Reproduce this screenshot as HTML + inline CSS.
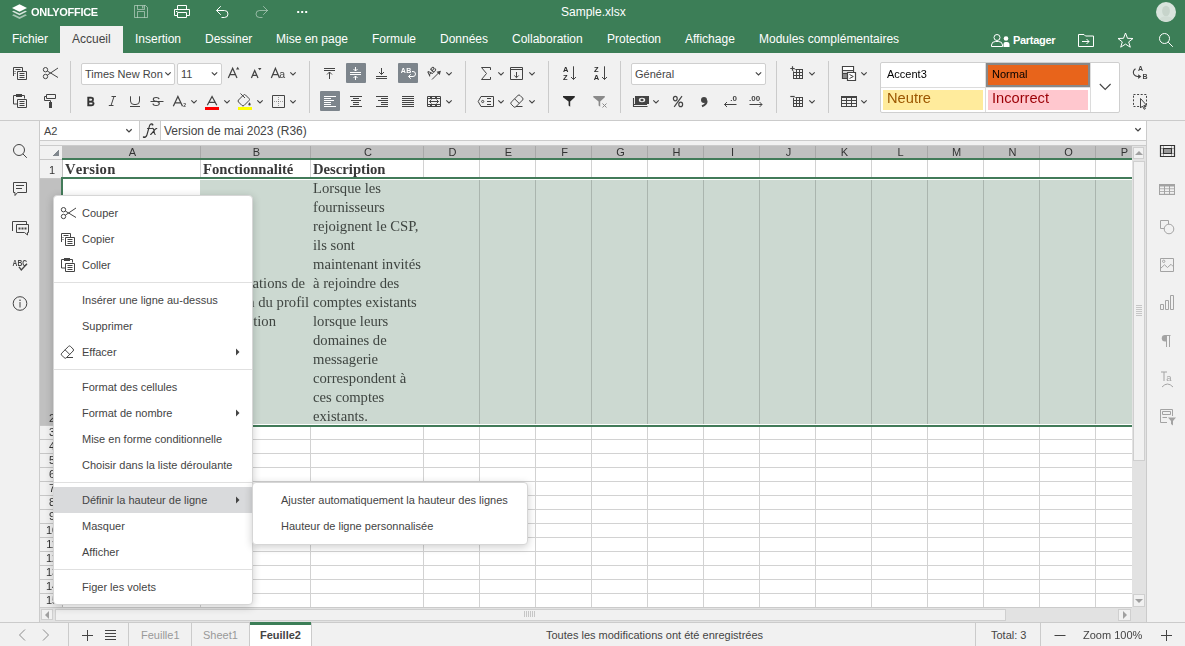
<!DOCTYPE html>
<html><head><meta charset="utf-8"><style>
html,body{margin:0;padding:0;}
.nk{font-kerning:none}
body{width:1185px;height:646px;overflow:hidden;position:relative;background:#f1f1f1;font-family:"Liberation Sans",sans-serif;}
svg{overflow:visible}
</style></head><body>
<div style="position:absolute;left:0px;top:0px;width:1185px;height:53px;background:#3c7e57;"></div><div style="position:absolute;left:31px;top:6px;font-size:11px;line-height:13px;color:#fff;font-weight:bold;font-family:'Liberation Sans';white-space:nowrap;letter-spacing:-0.3px;will-change:transform">ONLYOFFICE</div><div style="position:absolute;left:561px;top:5px;font-size:12px;line-height:14px;color:#fff;font-weight:normal;font-family:'Liberation Sans';white-space:nowrap;">Sample.xlsx</div><svg style="position:absolute;left:1154px;top:0px;overflow:hidden" width="24" height="24" viewBox="1154 0 24 24"><defs><clipPath id="av"><circle cx="1166" cy="12" r="10"/></clipPath></defs><circle cx="1166" cy="12" r="10" fill="#d9e4dd"/><g clip-path="url(#av)"><ellipse cx="1166" cy="11" rx="3.9" ry="5.2" fill="#c7d4cb"/><path d="M1158 23 Q1159.5 17 1164 16.5 H1168 Q1172.5 17 1174 23Z" fill="#d0dcd4"/></g></svg><div style="position:absolute;left:60px;top:26px;width:63px;height:27px;background:#f1f1f1;"></div><div style="position:absolute;left:12px;top:32px;font-size:12px;line-height:14px;color:#fff;font-weight:normal;font-family:'Liberation Sans';white-space:nowrap;">Fichier</div><div style="position:absolute;left:72px;top:32px;font-size:12px;line-height:14px;color:#444;font-weight:normal;font-family:'Liberation Sans';white-space:nowrap;">Accueil</div><div style="position:absolute;left:135px;top:32px;font-size:12px;line-height:14px;color:#fff;font-weight:normal;font-family:'Liberation Sans';white-space:nowrap;">Insertion</div><div style="position:absolute;left:205px;top:32px;font-size:12px;line-height:14px;color:#fff;font-weight:normal;font-family:'Liberation Sans';white-space:nowrap;">Dessiner</div><div style="position:absolute;left:276px;top:32px;font-size:12px;line-height:14px;color:#fff;font-weight:normal;font-family:'Liberation Sans';white-space:nowrap;">Mise en page</div><div style="position:absolute;left:372px;top:32px;font-size:12px;line-height:14px;color:#fff;font-weight:normal;font-family:'Liberation Sans';white-space:nowrap;">Formule</div><div style="position:absolute;left:440px;top:32px;font-size:12px;line-height:14px;color:#fff;font-weight:normal;font-family:'Liberation Sans';white-space:nowrap;">Données</div><div style="position:absolute;left:512px;top:32px;font-size:12px;line-height:14px;color:#fff;font-weight:normal;font-family:'Liberation Sans';white-space:nowrap;">Collaboration</div><div style="position:absolute;left:607px;top:32px;font-size:12px;line-height:14px;color:#fff;font-weight:normal;font-family:'Liberation Sans';white-space:nowrap;">Protection</div><div style="position:absolute;left:685px;top:32px;font-size:12px;line-height:14px;color:#fff;font-weight:normal;font-family:'Liberation Sans';white-space:nowrap;">Affichage</div><div style="position:absolute;left:759px;top:32px;font-size:12px;line-height:14px;color:#fff;font-weight:normal;font-family:'Liberation Sans';white-space:nowrap;">Modules complémentaires</div><svg style="position:absolute;left:991px;top:33px" width="20" height="15" viewBox="0 0 20 15" ><circle cx="6" cy="4.5" r="3" fill="none" stroke="#fff"/><path d="M0.5 13.5 V12 A3.8 3.8 0 0 1 4.3 8.5 H7.7 A3.8 3.8 0 0 1 11.5 12 V13.5Z" fill="none" stroke="#fff"/><circle cx="15" cy="5.5" r="2.3" fill="#fff"/><path d="M12.5 14 V11 A2 2 0 0 1 14.5 9 H16 A2.5 2.5 0 0 1 18.5 11.5 V14Z" fill="#fff"/></svg><div style="position:absolute;left:1013px;top:34px;font-size:11px;line-height:13px;color:#fff;font-weight:bold;font-family:'Liberation Sans';white-space:nowrap;letter-spacing:-0.3px">Partager</div><svg style="position:absolute;left:1078px;top:34px" width="17" height="14" viewBox="0 0 17 14" ><path d="M0.5 0.5 H6 L7.5 2 H15.5 V12.5 H0.5Z" fill="none" stroke="#fff"/><path d="M4 7.5 H11 M8.5 5 L11 7.5 L8.5 10" fill="none" stroke="#fff"/></svg><svg style="position:absolute;left:1117px;top:32px" width="17" height="16" viewBox="0 0 17 16" ><path d="M8.5 1 L10.5 6.3 L16 6.5 L11.7 9.9 L13.3 15.2 L8.5 12.1 L3.7 15.2 L5.3 9.9 L1 6.5 L6.5 6.3Z" fill="none" stroke="#fff"/></svg><svg style="position:absolute;left:1159px;top:33px" width="15" height="15" viewBox="0 0 15 15" ><circle cx="5.5" cy="5.5" r="5" fill="none" stroke="#fff"/><path d="M9.2 9.2 L13.8 13.8" stroke="#fff"/></svg><div style="position:absolute;left:0px;top:53px;width:1185px;height:67px;background:#f1f1f1;"></div><div style="position:absolute;left:0px;top:120px;width:1185px;height:1px;background:#cbcbcb;"></div><div style="position:absolute;left:70px;top:61px;width:1px;height:52px;background:#cbcbcb;"></div><div style="position:absolute;left:309px;top:61px;width:1px;height:52px;background:#cbcbcb;"></div><div style="position:absolute;left:465px;top:61px;width:1px;height:52px;background:#cbcbcb;"></div><div style="position:absolute;left:548px;top:61px;width:1px;height:52px;background:#cbcbcb;"></div><div style="position:absolute;left:620px;top:61px;width:1px;height:52px;background:#cbcbcb;"></div><div style="position:absolute;left:776px;top:61px;width:1px;height:52px;background:#cbcbcb;"></div><div style="position:absolute;left:828px;top:61px;width:1px;height:52px;background:#cbcbcb;"></div><div style="position:absolute;left:81px;top:63px;width:92px;height:20px;background:#fff;border:1px solid #cfcfcf;border-radius:2px"></div><div style="position:absolute;left:85px;top:68px;font-size:11px;line-height:13px;color:#444;font-weight:normal;font-family:'Liberation Sans';white-space:nowrap;">Times New Ron</div><div style="position:absolute;left:177px;top:63px;width:43px;height:20px;background:#fff;border:1px solid #cfcfcf;border-radius:2px"></div><div style="position:absolute;left:181px;top:68px;font-size:11px;line-height:13px;color:#444;font-weight:normal;font-family:'Liberation Sans';white-space:nowrap;">11</div><div style="position:absolute;left:631px;top:63px;width:133px;height:20px;background:#fff;border:1px solid #cfcfcf;border-radius:2px"></div><div style="position:absolute;left:635px;top:68px;font-size:11px;line-height:13px;color:#444;font-weight:normal;font-family:'Liberation Sans';white-space:nowrap;">Général</div><div style="position:absolute;left:346px;top:63px;width:20px;height:20px;background:#7d858c;border-radius:1px"></div><div style="position:absolute;left:398px;top:63px;width:20px;height:20px;background:#7d858c;border-radius:1px"></div><div style="position:absolute;left:320px;top:91px;width:20px;height:20px;background:#7d858c;border-radius:1px"></div><div style="position:absolute;left:880px;top:62px;width:240px;height:51px;background:#fff;box-sizing:border-box;border:1px solid #cfcfcf;border-radius:2px"></div><div style="position:absolute;left:881px;top:87px;width:209px;height:1px;background:#dcdcdc;"></div><div style="position:absolute;left:985px;top:63px;width:1px;height:49px;background:#dcdcdc;"></div><div style="position:absolute;left:1090px;top:63px;width:1px;height:49px;background:#dcdcdc;"></div><div style="position:absolute;left:887px;top:68px;font-size:11px;line-height:13px;color:#000;font-weight:normal;font-family:'Liberation Sans';white-space:nowrap;will-change:transform">Accent3</div><div style="position:absolute;left:986px;top:63px;width:104px;height:24px;background:#e8641b;box-sizing:border-box;border:2px solid #888"></div><div style="position:absolute;left:992px;top:68px;font-size:11px;line-height:13px;color:#000;font-weight:normal;font-family:'Liberation Sans';white-space:nowrap;will-change:transform">Normal</div><div style="position:absolute;left:883px;top:90px;width:100px;height:20px;background:#ffeb9c;"></div><div style="position:absolute;left:887px;top:90px;font-size:14.67px;line-height:16.67px;color:#9c5700;font-weight:normal;font-family:'Liberation Sans';white-space:nowrap;will-change:transform">Neutre</div><div style="position:absolute;left:988px;top:90px;width:100px;height:20px;background:#ffc7ce;"></div><div style="position:absolute;left:992px;top:90px;font-size:14.67px;line-height:16.67px;color:#9c0006;font-weight:normal;font-family:'Liberation Sans';white-space:nowrap;will-change:transform">Incorrect</div><svg style="position:absolute;left:0px;top:0px;will-change:transform;overflow:hidden" width="1185" height="120" viewBox="0 0 1185 120"><path d="M13.5 76 V67.5 H22.5 V71" stroke="#444444" fill="none"/><path d="M15.5 69.5 H20.5" stroke="#444444" fill="none"/><path d="M14.5 71 h1 v1 h-1z M14.5 73 h1 v1 h-1z" fill="#444444"/><path d="M17.5 71.5 H26.5 V79.5 H17.5Z" stroke="#444444" fill="#f1f1f1"/><path d="M19.5 73.5 H24.5 M19.5 75.5 H24.5 M19.5 77.5 H24.5" stroke="#444444" fill="none"/><circle cx="45.5" cy="69.7" r="2.2" fill="none" stroke="#444444"/><circle cx="45.5" cy="76.5" r="2.2" fill="none" stroke="#444444"/><path d="M47.3 71 L58 77.5 M47.3 75.2 L58 68" stroke="#444444" fill="none"/><path d="M16 95.5 H13.5 V104 H17 M22 95.5 H24.5 V98.5" stroke="#444444" fill="none"/><path d="M16 94 H22 V97 H16Z" fill="#444444"/><path d="M17.5 99.5 H26.5 V107.5 H17.5Z" stroke="#444444" fill="#f1f1f1"/><path d="M19.5 101.5 H24.5 M19.5 103.5 H24.5 M19.5 105.5 H24.5" stroke="#444444" fill="none"/><path d="M46.5 94.5 H55.5 V98.5 H46.5Z" stroke="#444444" fill="none" stroke-width="1" /><path d="M46.5 96.5 H44.5 V100.5 H50.5 V102" stroke="#444444" fill="none" stroke-width="1" /><path d="M49 102 H52 V108 H49Z" fill="#444444" /><path d="M228.3 78 L232.65 68.3 L237 78 M229.779 74.702 H235.52100000000002" stroke="#444444" fill="none" stroke-width="1.25" /><path d="M236 69.5 L237.7 66.8 L239.4 69.5Z" fill="#444444" /><path d="M251.4 78 L254.7 70.5 L258 78 M252.522 75.45 H256.878" stroke="#444444" fill="none" stroke-width="1.25" /><path d="M258 68 L261.5 68 L259.75 70.3Z" fill="#444444" /><path d="M271.3 78 L275.4 68.3 L279.5 78 M272.694 74.702 H278.106" stroke="#444444" fill="none" stroke-width="1.25" /><text x="279.3" y="78" font-family="Liberation Sans" font-size="10.5" font-weight="normal" fill="#444444" >a</text><path d="M290.3 72.3 L293 75 L295.7 72.3" stroke="#444444" fill="none" stroke-width="1.1" /><text x="86.7" y="106.3" font-family="Liberation Sans" font-size="13.5" font-weight="bold" fill="#333" textLength="8" lengthAdjust="spacingAndGlyphs" stroke="#333" stroke-width="0.35">B</text><path d="M111.5 96.5 H116 M108.8 105.5 H113.5 M114 96.5 L111 105.5" stroke="#444444" fill="none" stroke-width="1" /><path d="M130.5 96.3 V101 A3.5 3.5 0 0 0 134 104.5 H136 A3.5 3.5 0 0 0 139.5 101 V96.3" stroke="#444444" fill="none" stroke-width="1" /><path d="M130 106.5 H140" stroke="#444444" fill="none" stroke-width="1" /><path d="M150.5 101.5 H163.5" stroke="#444444" fill="none" stroke-width="1" /><text x="151.8" y="106.2" font-family="Liberation Sans" font-size="13" font-weight="normal" fill="#444444" >S</text><path d="M173.3 106.3 L177.9 96.5 L182.5 106.3 M174.864 102.968 H180.936" stroke="#444444" fill="none" stroke-width="1.25" /><text x="183.3" y="106.5" font-family="Liberation Sans" font-size="5" font-weight="bold" fill="#444444" >2</text><path d="M191.3 100.3 L194 103 L196.7 100.3" stroke="#444444" fill="none" stroke-width="1.1" /><path d="M207.3 105.3 L212.05 96.5 L216.8 105.3 M208.91500000000002 102.30799999999999 H215.185" stroke="#444444" fill="none" stroke-width="1.25" /><path d="M205 107 H219 V110 H205Z" fill="#ff0000" /><path d="M224.3 100.3 L227 103 L229.7 100.3" stroke="#444444" fill="none" stroke-width="1.1" /><path d="M240.5 93.5 L245 98" stroke="#444444" fill="none" stroke-width="1" /><path d="M238.5 100 L243.5 95 Q244.5 94 245.5 95 L249 98.5 Q250 99.5 249 100.5 L244 105.5 Q243 106.5 242 105.5 L238.5 102 Q237.5 101 238.5 100Z" stroke="#444444" fill="none" stroke-width="1" /><path d="M249.5 102.2 Q248 104 248.4 104.9 Q249.5 106.2 250.6 104.9 Q251 104 249.5 102.2Z" fill="#444444" /><path d="M238 107 H252 V110 H238Z" fill="#ffff00" /><path d="M257.3 100.3 L260 103 L262.7 100.3" stroke="#444444" fill="none" stroke-width="1.1" /><path d="M272.5 95.5 H284.5 V107.5 H272.5Z" stroke="#444444" fill="none" stroke-width="1" /><path d="M278.5 97 V106.5 M274 101.5 H283.5" stroke="#444444" fill="none" stroke-width="1" stroke-dasharray="1 1" opacity="0.5"/><path d="M290.3 100.3 L293 103 L295.7 100.3" stroke="#444444" fill="none" stroke-width="1.1" /><path d="M324 68.5 H335 M324 70.5 H335 M329.5 72 V79 M327 74.5 L329.5 72 L332 74.5" stroke="#444444" fill="none" stroke-width="1" /><path d="M350 72.5 H361 M350 74.5 H361 M355.5 67 V71 M353.5 69 L355.5 71 L357.5 69 M355.5 76 V80 M353.5 78 L355.5 76 L357.5 78" stroke="#ffffff" fill="none" stroke-width="1" /><path d="M376 76.5 H387 M376 78.5 H387 M381.5 68 V74.5 M379 72 L381.5 74.5 L384 72" stroke="#444444" fill="none" stroke-width="1" /><text x="400.8" y="73" font-family="Liberation Sans" font-size="7" font-weight="bold" fill="#ffffff" textLength="10.4" lengthAdjust="spacing">AB</text><path d="M412 71.5 H413 A2.5 2.5 0 0 1 413 76.5 H408.5 M410.8 74.2 L408.5 76.5 L410.8 78.8" stroke="#ffffff" fill="none" stroke-width="1" /><text x="429.5" y="77" font-family="Liberation Sans" font-size="7.5" font-weight="bold" fill="#444444" transform="rotate(-45 429.5 77)">AB</text><path d="M432 79.5 L440 71.5" stroke="#444444" fill="none" stroke-width="1" /><path d="M440.8 70.8 L436.5 71.8 L439.8 75.1Z" fill="#444444" /><path d="M446.3 72.3 L449 75 L451.7 72.3" stroke="#444444" fill="none" stroke-width="1.1" /><path d="M324 96.5 H336 M324 98.5 H331 M324 100.5 H334 M324 102.5 H331 M324 104.5 H331 M324 106.5 H336" stroke="#ffffff" fill="none" stroke-width="1" /><path d="M350 96.5 H362 M353 98.5 H359 M351 100.5 H361 M353 102.5 H359 M353 104.5 H359 M350 106.5 H362" stroke="#444444" fill="none" stroke-width="1" /><path d="M376 96.5 H388 M381 98.5 H388 M378 100.5 H388 M381 102.5 H388 M381 104.5 H388 M376 106.5 H388" stroke="#444444" fill="none" stroke-width="1" /><path d="M402 96.5 H414 M402 98.5 H414 M402 100.5 H414 M402 102.5 H414 M402 104.5 H414 M402 106.5 H414" stroke="#444444" fill="none" stroke-width="1" /><path d="M427.5 96.5 H440.5 V106.5 H427.5Z" stroke="#444444" fill="none" stroke-width="1" /><path d="M427.5 98.5 H440.5 M427.5 104.5 H440.5" stroke="#444444" fill="none" stroke-width="1" /><path d="M430 97.5 H432 M435 97.5 H437 M430 105.5 H432 M435 105.5 H437" stroke="#444444" fill="none" stroke-width="1" /><path d="M429.5 101.5 H438.5 M431.5 99.5 L429.5 101.5 L431.5 103.5 M436.5 99.5 L438.5 101.5 L436.5 103.5" stroke="#444444" fill="none" stroke-width="1" /><path d="M446.3 100.3 L449 103 L451.7 100.3" stroke="#444444" fill="none" stroke-width="1.1" /><path d="M490.5 70 V67.5 H481.5 L486.5 73.5 L481.5 79.5 H490.5 V77" stroke="#444444" fill="none" stroke-width="1" /><path d="M498.3 72.3 L501 75 L503.7 72.3" stroke="#444444" fill="none" stroke-width="1.1" /><path d="M510.5 67.5 H522.5 V79.5 H510.5Z M510.5 69.5 H522.5" stroke="#444444" fill="none" stroke-width="1" /><path d="M516.5 72 V77.5 M514.3 75.5 L516.5 77.7 L518.7 75.5" stroke="#444444" fill="none" stroke-width="1" /><path d="M529.3 72.3 L532 75 L534.7 72.3" stroke="#444444" fill="none" stroke-width="1.1" /><path d="M481 96.5 H493.5 V106.5 H481 L478.2 101.5Z" stroke="#444444" fill="none" stroke-width="1" /><circle cx="482.7" cy="101.5" r="1.1" fill="none" stroke="#444444"/><path d="M487 98.5 H491 M487 101.5 H491 M487 104.5 H491" stroke="#444444" fill="none" stroke-width="1" /><path d="M498.3 100.3 L501 103 L503.7 100.3" stroke="#444444" fill="none" stroke-width="1.1" /><path d="M511.2 102.2 L518 95.4 Q519 94.4 520 95.4 L522.6 98 Q523.6 99 522.6 100 L515.8 106.8 Q514.8 107.8 513.8 106.8 L511.2 104.2 Q510.2 103.2 511.2 102.2Z" stroke="#444444" fill="none"/><path d="M514.6 98.8 L519.2 103.4 M516 106.5 H522.5" stroke="#444444" fill="none"/><path d="M529.3 100.3 L532 103 L534.7 100.3" stroke="#444444" fill="none" stroke-width="1.1" /><text x="562.9" y="71.8" font-family="Liberation Sans" font-size="7.5" font-weight="bold" fill="#2a2a2a" >A</text><text x="563.1" y="79.8" font-family="Liberation Sans" font-size="7.5" font-weight="bold" fill="#2a2a2a" >Z</text><path d="M573.5 66.3 V79.5 M571 77 L573.5 79.5 L576 77" stroke="#444444" fill="none" stroke-width="1" /><text x="593.9" y="71.8" font-family="Liberation Sans" font-size="7.5" font-weight="bold" fill="#2a2a2a" >Z</text><text x="593.8" y="79.8" font-family="Liberation Sans" font-size="7.5" font-weight="bold" fill="#2a2a2a" >A</text><path d="M604.5 66.3 V79.5 M602 77 L604.5 79.5 L607 77" stroke="#444444" fill="none" stroke-width="1" /><path d="M563 96 H574.8 V97.2 L570.2 101.5 V106.8 L568.6 105.5 V101.5 L563 97.2Z" fill="#2a2a2a" /><path d="M593.3 96 H604.8 V97.2 L600.2 101.5 V106.8 L598.6 105.5 V101.5 L593.3 97.2Z" fill="#8a8a8a" /><path d="M602.5 103.5 L606.5 107.5 M606.5 103.5 L602.5 107.5" stroke="#8a8a8a" fill="none" stroke-width="1" /><path d="M635 96 H649 V104 H635Z" fill="#444444" /><ellipse cx="642" cy="100" rx="3.2" ry="2.2" fill="#f1f1f1"/><ellipse cx="642" cy="100" rx="1.6" ry="1.3" fill="#444444"/><path d="M633.5 98 V106.5 H647.5 M633.5 104.5 H635 M635 104.5 H647" stroke="#444444" fill="none" stroke-width="1.1" /><path d="M653.3 100.3 L656 103 L658.7 100.3" stroke="#444444" fill="none" stroke-width="1.1" /><ellipse cx="675.3" cy="98.6" rx="1.9" ry="2.2" stroke="#444444" stroke-width="1.2" fill="none"/><ellipse cx="680.7" cy="104.4" rx="1.9" ry="2.2" stroke="#444444" stroke-width="1.2" fill="none"/><path d="M682 96.2 L674.2 106.8" stroke="#444444" stroke-width="1.2"/><circle cx="704" cy="100" r="3" fill="#444444"/><path d="M706.6 100.5 Q706.8 104.5 702 106.3" stroke="#444444" fill="none" stroke-width="2" /><path d="M724.5 104.5 H736.5 M727 102 L724.5 104.5 L727 107" stroke="#444444" fill="none" stroke-width="1" /><text x="730.3" y="101.2" font-family="Liberation Sans" font-size="8" font-weight="bold" fill="#444444" >.0</text><path d="M749.5 104.5 H762 M759.5 102 L762 104.5 L759.5 107" stroke="#444444" fill="none" stroke-width="1" /><text x="749" y="101.2" font-family="Liberation Sans" font-size="8" font-weight="bold" fill="#444444" >.00</text><rect x="793" y="69" width="10" height="10" fill="#444444"/><rect x="794" y="70" width="2" height="2" fill="#f1f1f1"/><rect x="794" y="73" width="2" height="2" fill="#f1f1f1"/><rect x="794" y="76" width="2" height="2" fill="#f1f1f1"/><rect x="797" y="70" width="2" height="2" fill="#f1f1f1"/><rect x="797" y="73" width="2" height="2" fill="#f1f1f1"/><rect x="797" y="76" width="2" height="2" fill="#f1f1f1"/><rect x="800" y="70" width="2" height="2" fill="#f1f1f1"/><rect x="800" y="73" width="2" height="2" fill="#f1f1f1"/><rect x="800" y="76" width="2" height="2" fill="#f1f1f1"/><path d="M792.5 65.5 V71.5 M789.5 68.5 H795.5" stroke="#f1f1f1" fill="none" stroke-width="2.6" /><path d="M792.5 66.3 V70.7 M790.3 68.5 H794.7" stroke="#444444" fill="none" stroke-width="1.2" /><path d="M809.3 72.3 L812 75 L814.7 72.3" stroke="#444444" fill="none" stroke-width="1.1" /><rect x="793" y="97" width="10" height="10" fill="#444444"/><rect x="794" y="98" width="2" height="2" fill="#f1f1f1"/><rect x="794" y="101" width="2" height="2" fill="#f1f1f1"/><rect x="794" y="104" width="2" height="2" fill="#f1f1f1"/><rect x="797" y="98" width="2" height="2" fill="#f1f1f1"/><rect x="797" y="101" width="2" height="2" fill="#f1f1f1"/><rect x="797" y="104" width="2" height="2" fill="#f1f1f1"/><rect x="800" y="98" width="2" height="2" fill="#f1f1f1"/><rect x="800" y="101" width="2" height="2" fill="#f1f1f1"/><rect x="800" y="104" width="2" height="2" fill="#f1f1f1"/><path d="M789.5 96.5 H795.5" stroke="#f1f1f1" fill="none" stroke-width="2.6" /><path d="M790.3 96.5 H794.7" stroke="#444444" fill="none" stroke-width="1.2" /><path d="M809.3 100.3 L812 103 L814.7 100.3" stroke="#444444" fill="none" stroke-width="1.1" /><path d="M842.5 66.5 H853.5 V78.5 H842.5Z" stroke="#444444" fill="none" stroke-width="1.2" /><path d="M843 67 H853 V70 H843Z" fill="#ffffff" /><path d="M843 70.5 H853 V74 H843Z" fill="#d8d8d8" /><path d="M843 74 H853 V78 H843Z" fill="#8a8a8a" /><path d="M842.5 70.5 H853.5 M842.5 73.5 H853.5" stroke="#444444" fill="none" stroke-width="1" /><path d="M847.5 72.5 H855.5 V80.5 H847.5Z" stroke="#444444" fill="#ffffff" stroke-width="1.2" /><path d="M849.5 74.5 L853.3 76.5 L849.5 78.5" stroke="#444444" fill="none" stroke-width="1" /><path d="M861.3 72.3 L864 75 L866.7 72.3" stroke="#444444" fill="none" stroke-width="1.1" /><path d="M841 96 H857 V107 H841Z" fill="#444444" /><rect x="842" y="98" width="4" height="2" fill="#f1f1f1"/><rect x="847" y="98" width="4" height="2" fill="#f1f1f1"/><rect x="852" y="98" width="4" height="2" fill="#f1f1f1"/><rect x="842" y="101" width="4" height="2" fill="#f1f1f1"/><rect x="847" y="101" width="4" height="2" fill="#f1f1f1"/><rect x="852" y="101" width="4" height="2" fill="#f1f1f1"/><rect x="842" y="104" width="4" height="2" fill="#f1f1f1"/><rect x="847" y="104" width="4" height="2" fill="#f1f1f1"/><rect x="852" y="104" width="4" height="2" fill="#f1f1f1"/><path d="M861.3 100.3 L864 103 L866.7 100.3" stroke="#444444" fill="none" stroke-width="1.1" /><path d="M165.3 72.3 L168 75 L170.7 72.3" stroke="#444444" fill="none" stroke-width="1.1" /><path d="M211.8 72.3 L214.5 75 L217.2 72.3" stroke="#444444" fill="none" stroke-width="1.1" /><path d="M755.8 72.3 L758.5 75 L761.2 72.3" stroke="#444444" fill="none" stroke-width="1.1" /><path d="M1099.8 84 L1105.2 89.4 L1110.6 84" stroke="#444444" fill="none" stroke-width="1.1" /><text x="1137.9" y="70.8" font-family="Liberation Sans" font-size="7" font-weight="bold" fill="#444444" >A</text><text x="1142.4" y="78.8" font-family="Liberation Sans" font-size="7" font-weight="bold" fill="#444444" >B</text><path d="M1135.5 68.8 Q1132.5 71 1133.7 74 Q1135 76.6 1139.5 76.6" stroke="#444444" fill="none" stroke-width="1.1" /><path d="M1141.3 76.6 L1138.2 74.3 V78.9Z" fill="#444444" /><path d="M1133.5 94.5 H1146.5 V106.5 H1133.5Z" stroke="#444444" fill="none" stroke-width="1" stroke-dasharray="2 1.6"/><path d="M1140.5 98.5 V108 L1142.5 106 L1144.2 109.3 L1145.4 108.7 L1143.8 105.5 L1146.5 105.2Z" stroke="#444444" fill="#f1f1f1" stroke-width="1" /><path d="M134.5 5.5 H145.5 L147.5 7.5 V17.5 H134.5Z" stroke="rgba(255,255,255,0.45)" fill="none" stroke-width="1" /><path d="M137.5 5.5 V9.5 H144.5 V5.5 M137.5 17.5 V11.5 H144.5 V17.5" stroke="rgba(255,255,255,0.45)" fill="none" stroke-width="1" /><path d="M142 6 H143.5 V8.5 H142Z" fill="rgba(255,255,255,0.45)" /><path d="M177.5 9 V5.5 H186.5 V9 M177 15.5 H174.5 V9.5 H189.5 V15.5 H187 M177.5 12.5 H186.5 V17.5 H177.5Z" stroke="#ffffff" fill="none" stroke-width="1" /><path d="M176 11 H177.5 V12 H176Z" fill="#ffffff" /><path d="M216.5 10.5 H224.5 A3.5 3.5 0 0 1 224.5 17.5 H221.5 M220.8 6.2 L216.5 10.5 L220.8 14.8" stroke="#ffffff" fill="none" stroke-width="1" /><path d="M267.5 10.5 H259.5 A3.5 3.5 0 0 0 259.5 17.5 H262.5 M263.2 6.2 L267.5 10.5 L263.2 14.8" stroke="rgba(255,255,255,0.45)" fill="none" stroke-width="1" /><rect x="297.2" y="11" width="2" height="2" fill="#ffffff"/><rect x="301.2" y="11" width="2" height="2" fill="#ffffff"/><rect x="305.2" y="11" width="2" height="2" fill="#ffffff"/><path d="M19.5 4.3 L27 8 L19.5 11.7 L12 8Z" fill="#ffffff" /><path d="M13.8 10.7 L12 11.6 L19.5 15.3 L27 11.6 L25.2 10.7 L19.5 13.5Z" fill="rgba(255,255,255,0.8)" /><path d="M13.8 14.3 L12 15.2 L19.5 18.9 L27 15.2 L25.2 14.3 L19.5 17.1Z" fill="rgba(255,255,255,0.55)" /></svg><div style="position:absolute;left:0px;top:121px;width:1185px;height:525px;background:#f1f1f1;"></div><div style="position:absolute;left:39px;top:120px;width:1108px;height:1px;background:#cbcbcb;"></div><div style="position:absolute;left:40px;top:121px;width:99px;height:19px;background:#fff;"></div><div style="position:absolute;left:44px;top:125px;font-size:11px;line-height:13px;color:#444;font-weight:normal;font-family:'Liberation Sans';white-space:nowrap;">A2</div><div style="position:absolute;left:139px;top:121px;width:1px;height:19px;background:#cbcbcb;"></div><div style="position:absolute;left:140px;top:121px;width:20px;height:19px;background:#f1f1f1;"></div><svg style="position:absolute;left:140px;top:121px;will-change:transform;overflow:hidden" width="20" height="19" viewBox="140 121 20 19"><path d="M152.8 124.8 Q152 123.5 150.8 124 Q149.8 124.5 149.3 126.5 L146.9 135 Q146.2 137.4 143.8 137.4" stroke="#333" stroke-width="1.1" fill="none"/><circle cx="152.5" cy="124.7" r="0.9" fill="#333"/><circle cx="143.7" cy="137.1" r="0.9" fill="#333"/><path d="M147 128.5 H152.8" stroke="#333" stroke-width="0.9"/><path d="M152.3 128.4 Q153.4 128.2 153.8 129.8 L154.4 133.2 Q154.7 134.6 155.6 134.4 M157.2 128.6 Q156.4 128.2 155.5 129 L151.8 133.4 Q151 134.6 150.2 134.4" stroke="#333" stroke-width="1.1" fill="none"/></svg><div style="position:absolute;left:160px;top:121px;width:1px;height:19px;background:#cbcbcb;"></div><div style="position:absolute;left:161px;top:121px;width:985px;height:19px;background:#fff;"></div><div style="position:absolute;left:164px;top:124px;font-size:12px;line-height:14px;color:#444;font-weight:normal;font-family:'Liberation Sans';white-space:nowrap;">Version de mai 2023 (R36)</div><svg style="position:absolute;left:120px;top:124px;will-change:transform;overflow:hidden" width="1026" height="12" viewBox="120 124 1026 12"><path d="M126.3 129.2 L129 131.9 L131.7 129.2 M1135.3 128.2 L1138 130.9 L1140.7 128.2" stroke="#444" stroke-width="1.3" fill="none"/></svg><div style="position:absolute;left:39px;top:140px;width:1108px;height:1px;background:#cbcbcb;"></div><div style="position:absolute;left:39px;top:145px;width:1108px;height:1px;background:#cbcbcb;"></div><div style="position:absolute;left:39px;top:120px;width:1px;height:502px;background:#cbcbcb;"></div><div style="position:absolute;left:1146px;top:120px;width:1px;height:502px;background:#cbcbcb;"></div><svg style="position:absolute;left:10px;top:141px;overflow:hidden" width="20" height="19" viewBox="10 141 20 19"><circle cx="19" cy="150" r="5.5" stroke="#444444" fill="none"/><path d="M22.9 153.9 L26.8 157.8" stroke="#444444" fill="none"/></svg><svg style="position:absolute;left:10px;top:180px;overflow:hidden" width="20" height="18" viewBox="10 180 20 18"><path d="M13.5 182.5 H26.5 V192.5 H17.5 L15 195.5 V192.5 H13.5Z" stroke="#444444" fill="none"/><path d="M16 185.5 H24 M16 188.5 H22" stroke="#444444" fill="none"/></svg><svg style="position:absolute;left:10px;top:218px;overflow:hidden" width="20" height="20" viewBox="10 218 20 20"><path d="M12.5 231 V221.5 H26.5 V224" stroke="#444444" fill="none"/><path d="M16.5 224.5 H28.5 V232.5 H27.5 V235 L24.5 232.5 H16.5Z" stroke="#444444" fill="#f1f1f1"/><path d="M18.5 227.5 h2 v2 h-2z M21.5 227.5 h2 v2 h-2z M24.5 227.5 h2 v2 h-2z" fill="#444444"/></svg><svg style="position:absolute;left:10px;top:255px;will-change:transform;overflow:hidden" width="20" height="20" viewBox="10 255 20 20"><text x="12.6" y="266.2" font-family="Liberation Sans" font-size="8.2" font-weight="bold" fill="#444444" textLength="14.4" lengthAdjust="spacingAndGlyphs">ABC</text><path d="M19 266.8 L21.3 270 L27 263.8" stroke="#444444" stroke-width="1.3" fill="none"/></svg><svg style="position:absolute;left:12px;top:296px" width="16" height="16" viewBox="0 0 16 16" ><circle cx="8" cy="7.5" r="6.8" fill="none" stroke="#444444"/><path d="M8 6 V11.5" stroke="#444444"/><circle cx="8" cy="4.2" r="0.8" fill="#444444"/></svg><svg style="position:absolute;left:1147px;top:140px;will-change:transform;overflow:hidden" width="38" height="290" viewBox="1147 140 38 290"><path d="M1163.5 145.5 V156.5 M1171.5 145.5 V156.5 M1160.5 148.5 H1174.5 M1160.5 153.5 H1174.5" stroke="#aaa" fill="none"/><path d="M1160.5 145.5 H1174.5 V156.5 H1160.5Z M1163.5 148.5 H1171.5 V153.5 H1163.5Z" stroke="#333" stroke-width="1.2" fill="none"/><rect x="1164" y="149" width="7" height="4" fill="#999"/><rect x="1159" y="184" width="16" height="11" fill="#a3a3a3"/><rect x="1160" y="186.5" width="4" height="1.9" fill="#f1f1f1"/><rect x="1160" y="189.2" width="4" height="1.9" fill="#f1f1f1"/><rect x="1160" y="191.9" width="4" height="1.9" fill="#f1f1f1"/><rect x="1165" y="186.5" width="4" height="1.9" fill="#f1f1f1"/><rect x="1165" y="189.2" width="4" height="1.9" fill="#f1f1f1"/><rect x="1165" y="191.9" width="4" height="1.9" fill="#f1f1f1"/><rect x="1170" y="186.5" width="4" height="1.9" fill="#f1f1f1"/><rect x="1170" y="189.2" width="4" height="1.9" fill="#f1f1f1"/><rect x="1170" y="191.9" width="4" height="1.9" fill="#f1f1f1"/><path d="M1164 228.5 H1160.5 V220.5 H1168.5 V224" stroke="#a3a3a3" fill="none"/><circle cx="1169" cy="229" r="4.8" stroke="#a3a3a3" fill="none"/><path d="M1160.5 258.5 H1173.5 V271.5 H1160.5Z" stroke="#a3a3a3" fill="none"/><circle cx="1163.7" cy="261.3" r="1.2" stroke="#a3a3a3" fill="none"/><path d="M1160.5 268.5 L1164.5 264.8 L1167.5 267.5 L1171 264.3 L1173.5 266.8" stroke="#a3a3a3" fill="none"/><path d="M1160.5 304.5 H1163.5 V309.5 H1160.5Z M1165.5 300.5 H1168.5 V309.5 H1165.5Z M1170.5 295.5 H1173.5 V309.5 H1170.5Z" stroke="#a3a3a3" fill="none"/><path d="M1166.5 335 H1165 A3.2 3.2 0 0 0 1165 341.4 H1166.5Z" fill="#a3a3a3"/><path d="M1166.5 335.5 H1170.5 M1166.5 335 V347 M1169.5 335 V347" stroke="#a3a3a3" fill="none"/><path d="M1161 372 H1167 M1164 372 V381" stroke="#a3a3a3" fill="none"/><text x="1166.3" y="381" font-family="Liberation Sans" font-size="9.5" fill="#a3a3a3">a</text><path d="M1162 387 Q1167.5 381 1173 387" stroke="#a3a3a3" fill="none"/><path d="M1167 422.5 H1160.5 V409.5 H1172.5 V416" stroke="#a3a3a3" fill="none"/><path d="M1162.5 411.5 H1170.5 V414.5 H1162.5Z M1162.5 417.5 H1167" stroke="#a3a3a3" fill="none"/><path d="M1168 417.5 H1176 L1173 421 V425.5 L1171 424 V421Z" fill="#a3a3a3"/></svg><svg style="position:absolute;left:0;top:0" width="1185" height="646" shape-rendering="crispEdges"><rect x="62" y="146" width="1070" height="461" fill="#fff"/><rect x="63" y="146" width="1069" height="12" fill="#c0c0c0"/><rect x="40" y="146" width="22" height="13" fill="#f1f1f1"/><path d="M52.5 156 L59 149.5 V156Z" fill="#80878d"/><rect x="40" y="159" width="22" height="1" fill="#c6c6c6"/><rect x="40" y="160" width="22" height="447" fill="#f1f1f1"/><rect x="40" y="179" width="22" height="246" fill="#c0c0c0"/><rect x="40" y="178" width="22" height="1" fill="#c6c6c6"/><rect x="40" y="425" width="22" height="1" fill="#c6c6c6"/><rect x="40" y="439" width="22" height="1" fill="#c6c6c6"/><rect x="40" y="453" width="22" height="1" fill="#c6c6c6"/><rect x="40" y="467" width="22" height="1" fill="#c6c6c6"/><rect x="40" y="481" width="22" height="1" fill="#c6c6c6"/><rect x="40" y="495" width="22" height="1" fill="#c6c6c6"/><rect x="40" y="509" width="22" height="1" fill="#c6c6c6"/><rect x="40" y="523" width="22" height="1" fill="#c6c6c6"/><rect x="40" y="537" width="22" height="1" fill="#c6c6c6"/><rect x="40" y="551" width="22" height="1" fill="#c6c6c6"/><rect x="40" y="565" width="22" height="1" fill="#c6c6c6"/><rect x="40" y="579" width="22" height="1" fill="#c6c6c6"/><rect x="40" y="593" width="22" height="1" fill="#c6c6c6"/><rect x="40" y="607" width="22" height="1" fill="#c6c6c6"/><rect x="62" y="146" width="1" height="461" fill="#c0c0c0"/><rect x="200" y="146" width="1" height="12" fill="#a8a8a8"/><rect x="310" y="146" width="1" height="12" fill="#a8a8a8"/><rect x="423" y="146" width="1" height="12" fill="#a8a8a8"/><rect x="479" y="146" width="1" height="12" fill="#a8a8a8"/><rect x="535" y="146" width="1" height="12" fill="#a8a8a8"/><rect x="591" y="146" width="1" height="12" fill="#a8a8a8"/><rect x="647" y="146" width="1" height="12" fill="#a8a8a8"/><rect x="703" y="146" width="1" height="12" fill="#a8a8a8"/><rect x="759" y="146" width="1" height="12" fill="#a8a8a8"/><rect x="815" y="146" width="1" height="12" fill="#a8a8a8"/><rect x="871" y="146" width="1" height="12" fill="#a8a8a8"/><rect x="927" y="146" width="1" height="12" fill="#a8a8a8"/><rect x="983" y="146" width="1" height="12" fill="#a8a8a8"/><rect x="1039" y="146" width="1" height="12" fill="#a8a8a8"/><rect x="1095" y="146" width="1" height="12" fill="#a8a8a8"/><rect x="62" y="158" width="1070" height="2" fill="#427b59"/><rect x="200" y="180" width="932" height="244" fill="#ccd9d1"/><rect x="200" y="160" width="1" height="17" fill="#d2d2d2"/><rect x="200" y="427" width="1" height="180" fill="#d2d2d2"/><rect x="310" y="160" width="1" height="17" fill="#d2d2d2"/><rect x="310" y="427" width="1" height="180" fill="#d2d2d2"/><rect x="423" y="160" width="1" height="17" fill="#d2d2d2"/><rect x="423" y="427" width="1" height="180" fill="#d2d2d2"/><rect x="479" y="160" width="1" height="17" fill="#d2d2d2"/><rect x="479" y="180" width="1" height="244" fill="#aab5ae"/><rect x="479" y="427" width="1" height="180" fill="#d2d2d2"/><rect x="535" y="160" width="1" height="17" fill="#d2d2d2"/><rect x="535" y="180" width="1" height="244" fill="#aab5ae"/><rect x="535" y="427" width="1" height="180" fill="#d2d2d2"/><rect x="591" y="160" width="1" height="17" fill="#d2d2d2"/><rect x="591" y="180" width="1" height="244" fill="#aab5ae"/><rect x="591" y="427" width="1" height="180" fill="#d2d2d2"/><rect x="647" y="160" width="1" height="17" fill="#d2d2d2"/><rect x="647" y="180" width="1" height="244" fill="#aab5ae"/><rect x="647" y="427" width="1" height="180" fill="#d2d2d2"/><rect x="703" y="160" width="1" height="17" fill="#d2d2d2"/><rect x="703" y="180" width="1" height="244" fill="#aab5ae"/><rect x="703" y="427" width="1" height="180" fill="#d2d2d2"/><rect x="759" y="160" width="1" height="17" fill="#d2d2d2"/><rect x="759" y="180" width="1" height="244" fill="#aab5ae"/><rect x="759" y="427" width="1" height="180" fill="#d2d2d2"/><rect x="815" y="160" width="1" height="17" fill="#d2d2d2"/><rect x="815" y="180" width="1" height="244" fill="#aab5ae"/><rect x="815" y="427" width="1" height="180" fill="#d2d2d2"/><rect x="871" y="160" width="1" height="17" fill="#d2d2d2"/><rect x="871" y="180" width="1" height="244" fill="#aab5ae"/><rect x="871" y="427" width="1" height="180" fill="#d2d2d2"/><rect x="927" y="160" width="1" height="17" fill="#d2d2d2"/><rect x="927" y="180" width="1" height="244" fill="#aab5ae"/><rect x="927" y="427" width="1" height="180" fill="#d2d2d2"/><rect x="983" y="160" width="1" height="17" fill="#d2d2d2"/><rect x="983" y="180" width="1" height="244" fill="#aab5ae"/><rect x="983" y="427" width="1" height="180" fill="#d2d2d2"/><rect x="1039" y="160" width="1" height="17" fill="#d2d2d2"/><rect x="1039" y="180" width="1" height="244" fill="#aab5ae"/><rect x="1039" y="427" width="1" height="180" fill="#d2d2d2"/><rect x="1095" y="160" width="1" height="17" fill="#d2d2d2"/><rect x="1095" y="180" width="1" height="244" fill="#aab5ae"/><rect x="1095" y="427" width="1" height="180" fill="#d2d2d2"/><rect x="63" y="439" width="1069" height="1" fill="#d2d2d2"/><rect x="63" y="453" width="1069" height="1" fill="#d2d2d2"/><rect x="63" y="467" width="1069" height="1" fill="#d2d2d2"/><rect x="63" y="481" width="1069" height="1" fill="#d2d2d2"/><rect x="63" y="495" width="1069" height="1" fill="#d2d2d2"/><rect x="63" y="509" width="1069" height="1" fill="#d2d2d2"/><rect x="63" y="523" width="1069" height="1" fill="#d2d2d2"/><rect x="63" y="537" width="1069" height="1" fill="#d2d2d2"/><rect x="63" y="551" width="1069" height="1" fill="#d2d2d2"/><rect x="63" y="565" width="1069" height="1" fill="#d2d2d2"/><rect x="63" y="579" width="1069" height="1" fill="#d2d2d2"/><rect x="63" y="593" width="1069" height="1" fill="#d2d2d2"/><rect x="63" y="607" width="1069" height="1" fill="#d2d2d2"/><rect x="61" y="177" width="1071" height="2" fill="#427b59"/><rect x="61" y="425" width="1071" height="2" fill="#427b59"/><rect x="61" y="177" width="2" height="250" fill="#427b59"/></svg><div style="position:absolute;left:40px;top:146px;width:1092px;height:461px;overflow:hidden;will-change:transform"><div style="position:absolute;left:-40px;top:-146px;width:1185px;height:646px"><div style="position:absolute;left:122.5px;top:146px;width:20px;text-align:center;font-size:11px;line-height:13px;color:#333;font-family:'Liberation Sans'">A</div><div style="position:absolute;left:246.5px;top:146px;width:20px;text-align:center;font-size:11px;line-height:13px;color:#333;font-family:'Liberation Sans'">B</div><div style="position:absolute;left:358.0px;top:146px;width:20px;text-align:center;font-size:11px;line-height:13px;color:#333;font-family:'Liberation Sans'">C</div><div style="position:absolute;left:442.5px;top:146px;width:20px;text-align:center;font-size:11px;line-height:13px;color:#333;font-family:'Liberation Sans'">D</div><div style="position:absolute;left:498.5px;top:146px;width:20px;text-align:center;font-size:11px;line-height:13px;color:#333;font-family:'Liberation Sans'">E</div><div style="position:absolute;left:554.5px;top:146px;width:20px;text-align:center;font-size:11px;line-height:13px;color:#333;font-family:'Liberation Sans'">F</div><div style="position:absolute;left:610.5px;top:146px;width:20px;text-align:center;font-size:11px;line-height:13px;color:#333;font-family:'Liberation Sans'">G</div><div style="position:absolute;left:666.5px;top:146px;width:20px;text-align:center;font-size:11px;line-height:13px;color:#333;font-family:'Liberation Sans'">H</div><div style="position:absolute;left:722.5px;top:146px;width:20px;text-align:center;font-size:11px;line-height:13px;color:#333;font-family:'Liberation Sans'">I</div><div style="position:absolute;left:778.5px;top:146px;width:20px;text-align:center;font-size:11px;line-height:13px;color:#333;font-family:'Liberation Sans'">J</div><div style="position:absolute;left:834.5px;top:146px;width:20px;text-align:center;font-size:11px;line-height:13px;color:#333;font-family:'Liberation Sans'">K</div><div style="position:absolute;left:890.5px;top:146px;width:20px;text-align:center;font-size:11px;line-height:13px;color:#333;font-family:'Liberation Sans'">L</div><div style="position:absolute;left:946.5px;top:146px;width:20px;text-align:center;font-size:11px;line-height:13px;color:#333;font-family:'Liberation Sans'">M</div><div style="position:absolute;left:1002.5px;top:146px;width:20px;text-align:center;font-size:11px;line-height:13px;color:#333;font-family:'Liberation Sans'">N</div><div style="position:absolute;left:1058.5px;top:146px;width:20px;text-align:center;font-size:11px;line-height:13px;color:#333;font-family:'Liberation Sans'">O</div><div style="position:absolute;left:1114.5px;top:146px;width:20px;text-align:center;font-size:11px;line-height:13px;color:#333;font-family:'Liberation Sans'">P</div><div style="position:absolute;left:40.5px;top:164px;width:23px;text-align:center;font-size:11px;line-height:13px;color:#333;font-family:'Liberation Sans'">1</div><div style="position:absolute;left:40.5px;top:412px;width:23px;text-align:center;font-size:11px;line-height:13px;color:#333;font-family:'Liberation Sans'">2</div><div style="position:absolute;left:40.5px;top:426px;width:23px;text-align:center;font-size:11px;line-height:13px;color:#333;font-family:'Liberation Sans'">3</div><div style="position:absolute;left:40.5px;top:440px;width:23px;text-align:center;font-size:11px;line-height:13px;color:#333;font-family:'Liberation Sans'">4</div><div style="position:absolute;left:40.5px;top:454px;width:23px;text-align:center;font-size:11px;line-height:13px;color:#333;font-family:'Liberation Sans'">5</div><div style="position:absolute;left:40.5px;top:468px;width:23px;text-align:center;font-size:11px;line-height:13px;color:#333;font-family:'Liberation Sans'">6</div><div style="position:absolute;left:40.5px;top:482px;width:23px;text-align:center;font-size:11px;line-height:13px;color:#333;font-family:'Liberation Sans'">7</div><div style="position:absolute;left:40.5px;top:496px;width:23px;text-align:center;font-size:11px;line-height:13px;color:#333;font-family:'Liberation Sans'">8</div><div style="position:absolute;left:40.5px;top:510px;width:23px;text-align:center;font-size:11px;line-height:13px;color:#333;font-family:'Liberation Sans'">9</div><div style="position:absolute;left:40.5px;top:524px;width:23px;text-align:center;font-size:11px;line-height:13px;color:#333;font-family:'Liberation Sans'">10</div><div style="position:absolute;left:40.5px;top:538px;width:23px;text-align:center;font-size:11px;line-height:13px;color:#333;font-family:'Liberation Sans'">11</div><div style="position:absolute;left:40.5px;top:552px;width:23px;text-align:center;font-size:11px;line-height:13px;color:#333;font-family:'Liberation Sans'">12</div><div style="position:absolute;left:40.5px;top:566px;width:23px;text-align:center;font-size:11px;line-height:13px;color:#333;font-family:'Liberation Sans'">13</div><div style="position:absolute;left:40.5px;top:580px;width:23px;text-align:center;font-size:11px;line-height:13px;color:#333;font-family:'Liberation Sans'">14</div><div style="position:absolute;left:40.5px;top:594px;width:23px;text-align:center;font-size:11px;line-height:13px;color:#333;font-family:'Liberation Sans'">15</div><div style="position:absolute;left:65px;top:161px;font-family:'Liberation Serif';font-weight:bold;font-size:14.67px;line-height:17px;color:#383838;font-kerning:none;letter-spacing:0.25px">Version</div><div style="position:absolute;left:203px;top:161px;font-family:'Liberation Serif';font-weight:bold;font-size:14.67px;line-height:17px;color:#383838;font-kerning:none">Fonctionnalité</div><div style="position:absolute;left:313px;top:161px;font-family:'Liberation Serif';font-weight:bold;font-size:14.67px;line-height:17px;color:#383838;font-kerning:none">Description</div><div style="position:absolute;left:313px;top:179px;font-family:'Liberation Serif';font-size:14.67px;line-height:19px;color:#3f4541">Lorsque les<br>fournisseurs<br>rejoignent le CSP,<br>ils sont<br>maintenant invités<br>à rejoindre des<br>comptes existants<br>lorsque leurs<br>domaines de<br>messagerie<br>correspondent à<br>ces comptes<br>existants.</div><div style="position:absolute;left:252.5px;top:274px;font-family:'Liberation Serif';font-size:14.67px;line-height:19px;color:#3f4541;white-space:pre">ations de</div><div style="position:absolute;left:247.3px;top:293px;font-family:'Liberation Serif';font-size:14.67px;line-height:19px;color:#3f4541;white-space:pre">n du profil</div><div style="position:absolute;left:253.2px;top:312px;font-family:'Liberation Serif';font-size:14.67px;line-height:19px;color:#3f4541;white-space:pre">tion</div></div></div><div style="position:absolute;left:1132px;top:146px;width:14px;height:476px;background:#e2e2e2;"></div><div style="position:absolute;left:1133px;top:147px;width:11px;height:12px;background:#f1f1f1;box-sizing:border-box;border:1px solid #cfcfcf"></div><svg style="position:absolute;left:1135px;top:150px" width="8" height="6" viewBox="0 0 8 6" ><path d="M0 5 L4 1 L8 5Z" fill="#a0a0a0"/></svg><div style="position:absolute;left:1133px;top:161px;width:12px;height:300px;background:#f1f1f1;box-sizing:border-box;border:1px solid #cfcfcf"></div><svg style="position:absolute;left:1136px;top:305px" width="6" height="12" viewBox="0 0 6 12" ><path d="M0 0.5H6M0 2.5H6M0 4.5H6M0 6.5H6M0 8.5H6M0 10.5H6" stroke="#c6c6c6"/></svg><div style="position:absolute;left:1133px;top:594px;width:12px;height:13px;background:#f1f1f1;box-sizing:border-box;border:1px solid #cfcfcf"></div><svg style="position:absolute;left:1135px;top:598px" width="8" height="6" viewBox="0 0 8 6" ><path d="M0 1 L4 5 L8 1Z" fill="#a0a0a0"/></svg><div style="position:absolute;left:40px;top:607px;width:1092px;height:15px;background:#e2e2e2;"></div><div style="position:absolute;left:40px;top:607px;width:1092px;height:1px;background:#cbcbcb;"></div><div style="position:absolute;left:41px;top:609px;width:12px;height:11px;background:#f1f1f1;box-sizing:border-box;border:1px solid #cfcfcf"></div><svg style="position:absolute;left:44px;top:611px" width="6" height="8" viewBox="0 0 6 8" ><path d="M5 0 L1 4 L5 8Z" fill="#a0a0a0"/></svg><div style="position:absolute;left:55px;top:609px;width:951px;height:12px;background:#f1f1f1;box-sizing:border-box;border:1px solid #cfcfcf"></div><svg style="position:absolute;left:524px;top:611px" width="12" height="6" viewBox="0 0 12 6" ><path d="M0.5 0V6M2.5 0V6M4.5 0V6M6.5 0V6M8.5 0V6M10.5 0V6" stroke="#c6c6c6"/></svg><div style="position:absolute;left:1118px;top:609px;width:13px;height:12px;background:#f1f1f1;box-sizing:border-box;border:1px solid #cfcfcf"></div><svg style="position:absolute;left:1122px;top:611px" width="6" height="8" viewBox="0 0 6 8" ><path d="M1 0 L5 4 L1 8Z" fill="#a0a0a0"/></svg><div style="position:absolute;left:0px;top:622px;width:1185px;height:24px;background:#f1f1f1;"></div><div style="position:absolute;left:0px;top:622px;width:1185px;height:1px;background:#cbcbcb;"></div><svg style="position:absolute;left:18px;top:629px" width="8" height="12" viewBox="0 0 8 12" ><path d="M7 0.5 L1.5 6 L7 11.5" stroke="#8c8c8c" fill="none"/></svg><svg style="position:absolute;left:42px;top:629px" width="8" height="12" viewBox="0 0 8 12" ><path d="M1 0.5 L6.5 6 L1 11.5" stroke="#8c8c8c" fill="none"/></svg><div style="position:absolute;left:68px;top:623px;width:1px;height:23px;background:#cbcbcb;"></div><svg style="position:absolute;left:105px;top:630px" width="11" height="11" viewBox="0 0 11 11" ><path d="M0 0.5 H11 M0 3.5 H11 M0 6.5 H11 M0 9.5 H11" stroke="#444444" fill="none"/></svg><div style="position:absolute;left:128px;top:623px;width:1px;height:23px;background:#cbcbcb;"></div><div style="position:absolute;left:141px;top:629px;font-size:11px;line-height:13px;color:#999;font-weight:normal;font-family:'Liberation Sans';white-space:nowrap;">Feuille1</div><div style="position:absolute;left:191px;top:623px;width:1px;height:23px;background:#cbcbcb;"></div><div style="position:absolute;left:203px;top:629px;font-size:11px;line-height:13px;color:#999;font-weight:normal;font-family:'Liberation Sans';white-space:nowrap;">Sheet1</div><div style="position:absolute;left:249px;top:623px;width:1px;height:23px;background:#cbcbcb;"></div><div style="position:absolute;left:250px;top:623px;width:61px;height:23px;background:#fff;"></div><div style="position:absolute;left:250px;top:622px;width:61px;height:3px;background:#3c7e57;"></div><div style="position:absolute;left:260px;top:629px;font-size:11px;line-height:13px;color:#444;font-weight:bold;font-family:'Liberation Sans';white-space:nowrap;">Feuille2</div><div style="position:absolute;left:311px;top:623px;width:1px;height:23px;background:#cbcbcb;"></div><div style="position:absolute;left:546px;top:629px;font-size:11px;line-height:13px;color:#444;font-weight:normal;font-family:'Liberation Sans';white-space:nowrap;">Toutes les modifications ont été enregistrées</div><div style="position:absolute;left:975px;top:623px;width:1px;height:23px;background:#cbcbcb;"></div><div style="position:absolute;left:991px;top:629px;font-size:11px;line-height:13px;color:#444;font-weight:normal;font-family:'Liberation Sans';white-space:nowrap;">Total: 3</div><div style="position:absolute;left:1040px;top:623px;width:1px;height:23px;background:#cbcbcb;"></div><svg style="position:absolute;left:0px;top:0px" width="1185" height="646" viewBox="0 0 1185 646" ><path d="M1054.5 635.5 H1065.5 M1166.5 630 V641 M1161 635.5 H1172 M87.5 630 V641 M82 635.5 H93" stroke="#444444" stroke-width="1" fill="none"/></svg><div style="position:absolute;left:1083px;top:629px;font-size:11px;line-height:13px;color:#444;font-weight:normal;font-family:'Liberation Sans';white-space:nowrap;">Zoom 100%</div><div style="position:absolute;left:53px;top:195px;width:200px;height:410px;background:#fff;box-shadow:0 2px 8px rgba(0,0,0,0.2);border-radius:4px;box-sizing:border-box;border:1px solid #d6d6d6"></div><div style="position:absolute;left:54px;top:199px;width:198px;height:402px;background:#fff;transform:translateZ(0)"><div style="position:absolute;left:-54px;top:-199px;width:0;height:0"><div style="position:absolute;left:82px;top:207px;font-size:11px;line-height:13px;color:#444;font-weight:normal;font-family:'Liberation Sans';white-space:nowrap;">Couper</div><div style="position:absolute;left:82px;top:233px;font-size:11px;line-height:13px;color:#444;font-weight:normal;font-family:'Liberation Sans';white-space:nowrap;">Copier</div><div style="position:absolute;left:82px;top:259px;font-size:11px;line-height:13px;color:#444;font-weight:normal;font-family:'Liberation Sans';white-space:nowrap;">Coller</div><div style="position:absolute;left:54px;top:282px;width:198px;height:1px;background:#e0e0e0;"></div><div style="position:absolute;left:82px;top:294px;font-size:11px;line-height:13px;color:#444;font-weight:normal;font-family:'Liberation Sans';white-space:nowrap;">Insérer une ligne au-dessus</div><div style="position:absolute;left:82px;top:320px;font-size:11px;line-height:13px;color:#444;font-weight:normal;font-family:'Liberation Sans';white-space:nowrap;">Supprimer</div><div style="position:absolute;left:82px;top:346px;font-size:11px;line-height:13px;color:#444;font-weight:normal;font-family:'Liberation Sans';white-space:nowrap;">Effacer</div><div style="position:absolute;left:54px;top:369px;width:198px;height:1px;background:#e0e0e0;"></div><div style="position:absolute;left:82px;top:381px;font-size:11px;line-height:13px;color:#444;font-weight:normal;font-family:'Liberation Sans';white-space:nowrap;">Format des cellules</div><div style="position:absolute;left:82px;top:407px;font-size:11px;line-height:13px;color:#444;font-weight:normal;font-family:'Liberation Sans';white-space:nowrap;">Format de nombre</div><div style="position:absolute;left:82px;top:433px;font-size:11px;line-height:13px;color:#444;font-weight:normal;font-family:'Liberation Sans';white-space:nowrap;">Mise en forme conditionnelle</div><div style="position:absolute;left:82px;top:459px;font-size:11px;line-height:13px;color:#444;font-weight:normal;font-family:'Liberation Sans';white-space:nowrap;">Choisir dans la liste déroulante</div><div style="position:absolute;left:54px;top:482px;width:198px;height:1px;background:#e0e0e0;"></div><div style="position:absolute;left:54px;top:487px;width:198px;height:26px;background:#d9dadc;"></div><div style="position:absolute;left:82px;top:494px;font-size:11px;line-height:13px;color:#444;font-weight:normal;font-family:'Liberation Sans';white-space:nowrap;">Définir la hauteur de ligne</div><div style="position:absolute;left:82px;top:520px;font-size:11px;line-height:13px;color:#444;font-weight:normal;font-family:'Liberation Sans';white-space:nowrap;">Masquer</div><div style="position:absolute;left:82px;top:546px;font-size:11px;line-height:13px;color:#444;font-weight:normal;font-family:'Liberation Sans';white-space:nowrap;">Afficher</div><div style="position:absolute;left:54px;top:569px;width:198px;height:1px;background:#e0e0e0;"></div><div style="position:absolute;left:82px;top:581px;font-size:11px;line-height:13px;color:#444;font-weight:normal;font-family:'Liberation Sans';white-space:nowrap;">Figer les volets</div><svg style="position:absolute;left:54px;top:199px;overflow:hidden" width="198" height="402" viewBox="54 199 198 402"><g transform="translate(18 140)"><circle cx="45.5" cy="69.7" r="2.2" fill="none" stroke="#444"/><circle cx="45.5" cy="76.5" r="2.2" fill="none" stroke="#444"/><path d="M47.3 71 L58 77.5 M47.3 75.2 L58 68" stroke="#444" fill="none"/></g><g transform="translate(48 166)"><path d="M13.5 76 V67.5 H22.5 V71" stroke="#444" fill="none"/><path d="M15.5 69.5 H20.5" stroke="#444" fill="none"/><path d="M14.5 71 h1 v1 h-1z M14.5 73 h1 v1 h-1z" fill="#444"/><path d="M17.5 71.5 H26.5 V79.5 H17.5Z" stroke="#444" fill="#fff"/><path d="M19.5 73.5 H24.5 M19.5 75.5 H24.5 M19.5 77.5 H24.5" stroke="#444" fill="none"/></g><g transform="translate(48 164)"><path d="M16 95.5 H13.5 V104 H17 M22 95.5 H24.5 V98.5" stroke="#444" fill="none"/><path d="M16 94 H22 V97 H16Z" fill="#444"/><path d="M17.5 99.5 H26.5 V107.5 H17.5Z" stroke="#444" fill="#fff"/><path d="M19.5 101.5 H24.5 M19.5 103.5 H24.5 M19.5 105.5 H24.5" stroke="#444" fill="none"/></g><g transform="translate(-449.5 251)"><path d="M511.2 102.2 L518 95.4 Q519 94.4 520 95.4 L522.6 98 Q523.6 99 522.6 100 L515.8 106.8 Q514.8 107.8 513.8 106.8 L511.2 104.2 Q510.2 103.2 511.2 102.2Z" stroke="#444" fill="none"/><path d="M514.6 98.8 L519.2 103.4 M516 106.5 H522.5" stroke="#444" fill="none"/></g><path d="M236 348.5 L239.5 352 L236 355.5Z" fill="#444"/><path d="M236 409.5 L239.5 413 L236 416.5Z" fill="#444"/><path d="M236 496.5 L239.5 500 L236 503.5Z" fill="#444"/></svg></div></div><div style="position:absolute;left:252px;top:482px;width:276px;height:63px;background:#fff;box-shadow:0 2px 8px rgba(0,0,0,0.2);border-radius:4px;box-sizing:border-box;border:1px solid #d6d6d6"></div><div style="position:absolute;left:253px;top:487px;width:274px;height:53px;background:#fff;transform:translateZ(0)"><div style="position:absolute;left:-253px;top:-487px;width:0;height:0"><div style="position:absolute;left:281px;top:494px;font-size:11px;line-height:13px;color:#444;font-weight:normal;font-family:'Liberation Sans';white-space:nowrap;">Ajuster automatiquement la hauteur des lignes</div><div style="position:absolute;left:281px;top:520px;font-size:11px;line-height:13px;color:#444;font-weight:normal;font-family:'Liberation Sans';white-space:nowrap;">Hauteur de ligne personnalisée</div></div></div>
</body></html>
